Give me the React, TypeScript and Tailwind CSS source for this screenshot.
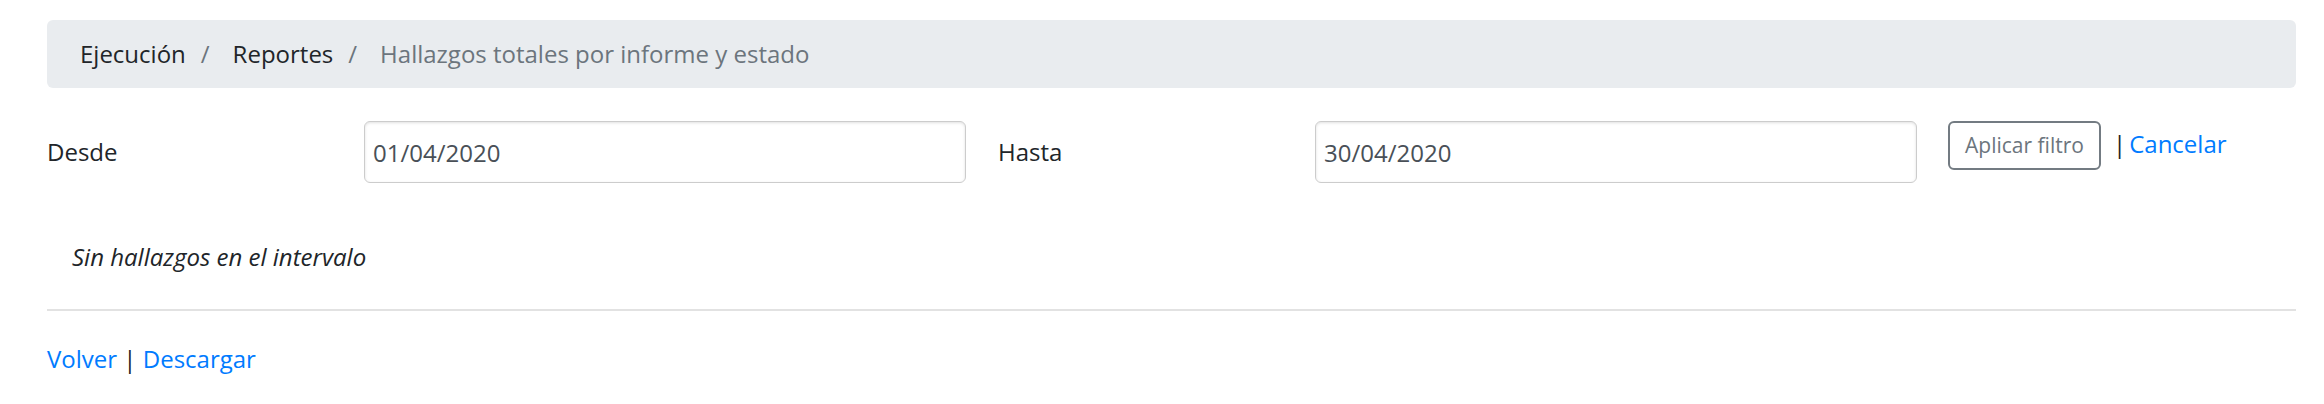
import { useState } from 'react';

const crumbs = ['Ejecución', 'Reportes'];

function Breadcrumb() {
  return (
    <nav className="flex items-center h-[68px] pl-[33px] bg-[#e9ecef] rounded-[6px] text-[24px] leading-[36px]">
      {crumbs.map((c) => (
        <span key={c} className="flex items-center">
          <a href="#" className="text-[#212529]">{c}</a>
          <span className="ml-[15px] mr-[23px] text-[#6c757d]">/</span>
        </span>
      ))}
      <span className="text-[#6c757d]">Hallazgos totales por informe y estado</span>
    </nav>
  );
}

function DateField({ label, value, onChange }: { label: string; value: string; onChange: (v: string) => void }) {
  return (
    <>
      <label className="w-[317px] h-[62px] flex items-center text-[#212529]">{label}</label>
      <input
        type="text"
        value={value}
        onChange={(e) => onChange(e.target.value)}
        className="w-[602px] h-[62px] mr-[32px] pl-[8px] border border-[#cccccc] rounded-[6px] shadow-[inset_0_1px_3px_rgba(0,0,0,0.12)] text-[#495057] outline-none"
      />
    </>
  );
}

export default function App() {
  const [desde, setDesde] = useState('01/04/2020');
  const [hasta, setHasta] = useState('30/04/2020');

  return (
    <div
      className="w-[2249px] ml-[47px] pt-[20px] text-[24px] leading-[36px] text-[#212529]"
      style={{ fontFamily: '"Open Sans", "Noto Sans", sans-serif' }}
    >
      <Breadcrumb />

      <div className="flex items-start mt-[33px]">
        <DateField label="Desde" value={desde} onChange={setDesde} />
        <DateField label="Hasta" value={hasta} onChange={setHasta} />
        <div className="flex items-baseline -ml-[1px]">
          <button className="w-[153px] h-[49px] border-2 border-[#737b82] rounded-[6px] text-[21px] leading-[31.5px] text-[#6c757d] bg-white">
            Aplicar filtro
          </button>
          <span className="ml-[12px] mr-[3px]">|</span>
          <a href="#" className="text-[#007bff]">Cancelar</a>
        </div>
      </div>

      <p className="mt-[56px] pl-[25px] italic">Sin hallazgos en el intervalo</p>

      <hr className="mt-[34px] h-[2px] border-0 bg-[#e2e2e2]" />

      <div className="mt-[30px]">
        <a href="#" className="text-[#007bff]">Volver</a>
        <span> | </span>
        <a href="#" className="text-[#007bff]">Descargar</a>
      </div>
    </div>
  );
}
